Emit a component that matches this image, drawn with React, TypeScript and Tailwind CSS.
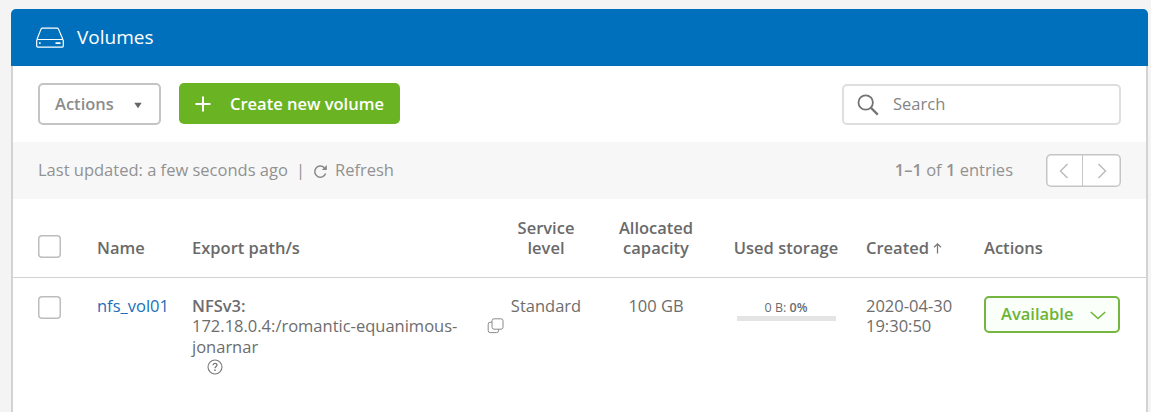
import type { ReactNode } from 'react';

const columns = 'grid grid-cols-[59px_95px_313px_82px_138px_122px_137px_136px] px-[25px]';

function DriveIcon() {
  return (
    <svg width="30" height="22" viewBox="0 0 30 22" fill="none" stroke="#fff" strokeWidth="1.2" strokeLinejoin="round">
      <path d="M1.9 12.5 6 2.1q.4-1 1.5-1H22q1.1 0 1.5 1l4.4 10.4" />
      <rect x="1.7" y="12.5" width="26.6" height="7.6" rx="1" />
      <path d="M4 16.2h1.6M20.500 16.2h5" strokeWidth="1.7" />
    </svg>
  );
}

function SearchIcon() {
  return (
    <svg width="22" height="22" viewBox="0 0 22 22" fill="none" stroke="#737373" strokeWidth="1.8">
      <circle cx="8.7" cy="8.5" r="7.2" />
      <path d="m13.8 13.6 7 7" strokeWidth="2.2" />
    </svg>
  );
}

function RefreshIcon() {
  return (
    <svg width="15" height="15" viewBox="0 0 15 15" fill="none" stroke="#858585" strokeWidth="1.5">
      <path d="M11.2 3.6A5.6 5.6 0 1 0 12.6 9.6" />
      <path d="M13.8 1v5H8.8z" fill="#858585" stroke="none" />
    </svg>
  );
}

function CopyIcon() {
  return (
    <svg width="17" height="16" viewBox="0 0 17 16" fill="none" stroke="#8a8a8a" strokeWidth="1">
      <rect x="5" y="0.8" width="11" height="10.4" rx="2" />
      <path d="M5 4.2H3.2q-2 0-2 2v6.4q0 2 2 2h6.4q2 0 2-2v-1.4" />
    </svg>
  );
}

function HelpIcon() {
  return (
    <svg width="16" height="16" viewBox="0 0 16 16" fill="none" stroke="#777">
      <circle cx="8" cy="8" r="7" strokeWidth="1.1" />
      <path d="M6 6.3c.1-2.6 4-2.5 4-.2C10 7.6 8 7.5 8 9.3" strokeWidth="1.3" />
      <path d="M8 10.6v1.5" strokeWidth="1.5" />
    </svg>
  );
}

function Chevron({ d }: { d: string }) {
  return (
    <svg width="16" height="16" viewBox="0 0 16 16" fill="none" stroke="#b9b9b9" strokeWidth="1.4">
      <path d={d} />
    </svg>
  );
}

function Checkbox() {
  return (
    <button className="block h-[23px] w-[23px] rounded-[4px] bg-white inset-ring-[1.5px] inset-ring-[#bdbdbf]" aria-label="Select" />
  );
}

function HeaderCell({ children, className = '' }: { children?: ReactNode; className?: string }) {
  return <div className={`flex items-end font-semibold text-[#6a6a6a] ${className}`}>{children}</div>;
}

export default function App() {
  return (
    <div className="h-[412px] overflow-hidden bg-[#f4f4f4] pt-[9px] pr-[3px] pl-[11px] font-['Open_Sans','Noto_Sans',sans-serif] text-[16.5px] leading-5 text-[#6d6d6d]">
      <header className="flex h-[57px] items-center rounded-t-[5px] bg-[#0070bd] pl-[24px] text-white">
        <DriveIcon />
        <h1 className="-mt-[2px] ml-3 text-[19px]">Volumes</h1>
      </header>

      <main className="h-[346px] border-x-2 border-[#d3d3d3] bg-white">
        <div className="flex h-[76px] items-start px-[25px] pt-[17px]">
          <button className="flex h-[42px] w-[123px] items-center rounded-[5px] border-2 border-[#c4c4c7] pl-[15px] font-semibold text-[#8c8c8c]">
            Actions
            <svg className="mt-[2px] ml-[20px]" width="8" height="7" viewBox="0 0 8 7">
              <path d="M.3.7h7.4L4 6.3z" fill="#666" />
            </svg>
          </button>
          <button className="ml-[18px] flex h-[41px] w-[221px] items-center rounded-[5px] bg-[#6ab423] pl-4 font-semibold text-white">
            <svg className="mt-px" width="16" height="16" viewBox="0 0 16 16" stroke="#fff" strokeWidth="2">
              <path d="M8 .5v15M.5 8h15" />
            </svg>
            <span className="ml-[19px]">Create new volume</span>
          </button>
          <div className="mt-px ml-auto flex h-[41px] w-[279px] items-center rounded-[5px] border-2 border-[#dedede] pl-[13px] text-[#858585]">
            <SearchIcon />
            <span className="-mt-px ml-[14px]">Search</span>
          </div>
        </div>

        <div className="flex h-[57px] items-center bg-[#f7f7f7] px-[25px] pb-px text-[#929292]">
          <span>Last updated: a few seconds ago</span>
          <span className="mr-[8px] ml-[8px]">|</span>
          <span className="pt-[3px]"><RefreshIcon /></span>
          <span className="ml-[7px]">Refresh</span>
          <span className="ml-auto">
            <b className="font-semibold">1–1</b> of <b className="font-semibold">1</b> entries
          </span>
          <div className="mt-px ml-[33px] flex h-[33px] w-[75px] rounded-[5px] bg-white inset-ring-[1.5px] inset-ring-[#c3c5c7]">
            <button className="flex w-[37px] items-center justify-center border-r border-[#c3c5c7]" aria-label="Previous">
              <Chevron d="M11.5 1 4.5 8l7 7" />
            </button>
            <button className="flex flex-1 items-center justify-center pr-px" aria-label="Next">
              <Chevron d="m4.5 1 7 7-7 7" />
            </button>
          </div>
        </div>

        <div className={`${columns} h-[79px] border-b border-[#d2d2d2] pb-[19px]`}>
          <HeaderCell><Checkbox /></HeaderCell>
          <HeaderCell>Name</HeaderCell>
          <HeaderCell>Export path/s</HeaderCell>
          <HeaderCell className="justify-center text-center">Service<br />level</HeaderCell>
          <HeaderCell className="justify-center text-center">Allocated<br />capacity</HeaderCell>
          <HeaderCell className="justify-center">Used storage</HeaderCell>
          <HeaderCell className="pl-[19px]">
            Created
            <svg className="mb-[4px] ml-1" width="9" height="12" viewBox="0 0 10 12" fill="none" stroke="#777" strokeWidth="1.4">
              <path d="M5 12V1.5M1.2 5.2 5 1.4l3.8 3.8" />
            </svg>
          </HeaderCell>
          <HeaderCell>Actions</HeaderCell>
        </div>

        <div className={`${columns} pt-[18px] leading-[20.4px]`}>
          <Checkbox />
          <a className="text-[#1a6fba]">nfs_vol01</a>
          <div>
            <p className="font-semibold">NFSv3:</p>
            <div className="flex justify-between pr-px">
              <span className="whitespace-nowrap">172.18.0.4:/romantic-equanimous-<br />jonarnar</span>
              <span className="pt-[2px]"><CopyIcon /></span>
            </div>
            <div className="pt-[2px] pl-[15px]"><HelpIcon /></div>
          </div>
          <div className="text-center">Standard</div>
          <div className="text-center">100 GB</div>
          <div className="flex flex-col items-center pt-[3px]">
            <span className="text-[12.5px] leading-[17px]">0 B: <b className="font-semibold">0%</b></span>
            <div className="h-[5px] w-[99px] bg-[#e4e4e4]" />
          </div>
          <div className="pl-[19px]">2020-04-30<br />19:30:50</div>
          <button className="flex h-[37px] items-center rounded-[5px] border-2 border-[#74b63f] bg-[#fafffa] pl-[15px] font-semibold text-[#6cb436]">
            <span className="-mt-px">Available</span>
            <svg className="mt-[2px] ml-[17px]" width="16" height="9" viewBox="0 0 16 9" fill="none" stroke="#6cb436" strokeWidth="1.5">
              <path d="M.8 1 8 7.500 15.200 1" />
            </svg>
          </button>
        </div>
      </main>
    </div>
  );
}
